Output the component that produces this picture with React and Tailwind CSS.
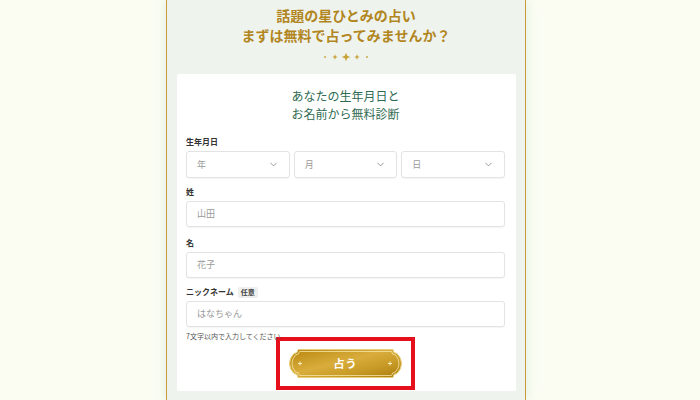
import React from 'react';
import { ChevronDown } from 'lucide-react';

const jp = { fontFamily: '"Noto Sans CJK JP", "Noto Sans", sans-serif' };
const serif = { fontFamily: '"Liberation Serif", "Noto Sans CJK JP", serif' };

const Ornament = () => (
    <svg width="46" height="10" viewBox="0 0 46 10" className="mx-auto block">
        <circle cx="2" cy="5" r="0.9" fill="#c9a23a" />
        <path d="M12 2.3 L12.8 4.2 L14.7 5 L12.8 5.8 L12 7.7 L11.2 5.8 L9.3 5 L11.2 4.2 Z" fill="#c9a23a" />
        <path d="M23 0.8 L24.2 3.8 L27.2 5 L24.2 6.2 L23 9.2 L21.8 6.2 L18.8 5 L21.8 3.8 Z" fill="#c9a23a" />
        <path d="M34 2.3 L34.8 4.2 L36.7 5 L34.8 5.8 L34 7.7 L33.2 5.8 L31.3 5 L33.2 4.2 Z" fill="#c9a23a" />
        <circle cx="44" cy="5" r="0.9" fill="#c9a23a" />
    </svg>
);

const Select = ({ label }) => (
    <div className="flex-1 h-[27px] flex items-center justify-between pl-[10px] pr-[10px] bg-white border border-[#e3e3e3] rounded-[3px] shadow-[0_1px_1px_rgba(0,0,0,0.04)]">
        <span className="text-[9px] text-[#9a9a9a]">{label}</span>
        <ChevronDown size={11} strokeWidth={1.6} className="text-[#777]" />
    </div>
);

const Input = ({ placeholder }) => (
    <div className="h-[26px] flex items-center pl-[10px] bg-white border border-[#e3e3e3] rounded-[3px] shadow-[0_1px_1px_rgba(0,0,0,0.04)]">
        <span className="text-[9px] text-[#9a9a9a]">{placeholder}</span>
    </div>
);

const Label = ({ children }) => (
    <div className="text-[8px] font-bold text-[#333] leading-[12px] mb-[3px] flex items-center gap-[4px]">{children}</div>
);

const GoldButton = () => (
    <div className="relative w-[113px] h-[29px] flex items-center justify-center">
        <svg width="113" height="29" viewBox="0 0 113 29" className="absolute inset-0">
            <defs>
                <linearGradient id="gold" x1="0" y1="0" x2="1" y2="1">
                    <stop offset="0" stopColor="#b8860f" />
                    <stop offset="0.45" stopColor="#d9ad3c" />
                    <stop offset="0.7" stopColor="#c89a26" />
                    <stop offset="1" stopColor="#a97a0c" />
                </linearGradient>
            </defs>
            <path d="M9 0.5 H104 A4 4 0 0 0 108 4.5 Q112.5 9 112.5 14.5 Q112.5 20 108 24.5 A4 4 0 0 0 104 28.5 H9 A4 4 0 0 0 5 24.5 Q0.5 20 0.5 14.5 Q0.5 9 5 4.5 A4 4 0 0 0 9 0.5 Z" fill="url(#gold)" stroke="#e8cf7a" strokeWidth="1" />
            <path d="M10.5 2.5 H102.5 A4 4 0 0 0 106.5 6 Q110 10 110 14.5 Q110 19 106.5 23 A4 4 0 0 0 102.5 26.5 H10.5 A4 4 0 0 0 6.5 23 Q3 19 3 14.5 Q3 10 6.5 6 A4 4 0 0 0 10.5 2.5 Z" fill="none" stroke="#f6e6a8" strokeWidth="0.8" />
            <path d="M11 12.5 V16.5 M9 14.5 H13" stroke="#fff6d0" strokeWidth="0.9" />
            <path d="M101 12.5 V16.5 M99 14.5 H103" stroke="#fff6d0" strokeWidth="0.9" />
        </svg>
        <span className="relative text-white text-[11px] font-bold tracking-[1px]" style={jp}>占う</span>
    </div>
);

export default function App() {
    return (
        <div className="w-[700px] h-[400px] overflow-hidden bg-[#fbfdf3]" style={jp}>
            <div className="ml-[166px] w-[360px] h-[400px] bg-[#eef3ed] border-x border-[#c99a3a] pt-[7px] px-[10px] shadow-[0_0_12px_rgba(180,210,190,0.35)]">
                <div className="text-center text-[14px] font-bold leading-[20px] text-[#b2861e]" style={serif}>
                    <div>話題の星ひとみの占い</div>
                    <div>まずは無料で占ってみませんか？</div>
                </div>
                <div className="mt-[5px]">
                    <Ornament />
                </div>
                <div className="mt-[12px] w-[339px] bg-white rounded-[2px] pt-[14px] pl-[9px] pr-[11px] pb-[1px]">
                    <div className="text-center text-[12px] leading-[18px] text-[#2f6b52]" style={serif}>
                        <div>あなたの生年月日と</div>
                        <div>お名前から無料診断</div>
                    </div>
                    <div className="mt-[12px]">
                        <Label>生年月日</Label>
                        <div className="flex gap-[4px]">
                            <Select label="年" />
                            <Select label="月" />
                            <Select label="日" />
                        </div>
                    </div>
                    <div className="mt-[8px]">
                        <Label>姓</Label>
                        <Input placeholder="山田" />
                    </div>
                    <div className="mt-[10px]">
                        <Label>名</Label>
                        <Input placeholder="花子" />
                    </div>
                    <div className="mt-[8px]">
                        <Label>
                            ニックネーム
                            <span className="bg-[#eef0ed] text-[#444] text-[7px] px-[3px] leading-[11px] rounded-[2px]">任意</span>
                        </Label>
                        <Input placeholder="はなちゃん" />
                    </div>
                    <div className="mt-[5px] text-[7px] leading-[8px] text-[#555] relative z-10">7文字以内で入力してください</div>
                    <div className="-mt-[3px] flex justify-center">
                        <div className="w-[139px] h-[53px] border-[4px] border-[#e6101d] flex items-center justify-center">
                            <GoldButton />
                        </div>
                    </div>
                </div>
            </div>
        </div>
    );
}
